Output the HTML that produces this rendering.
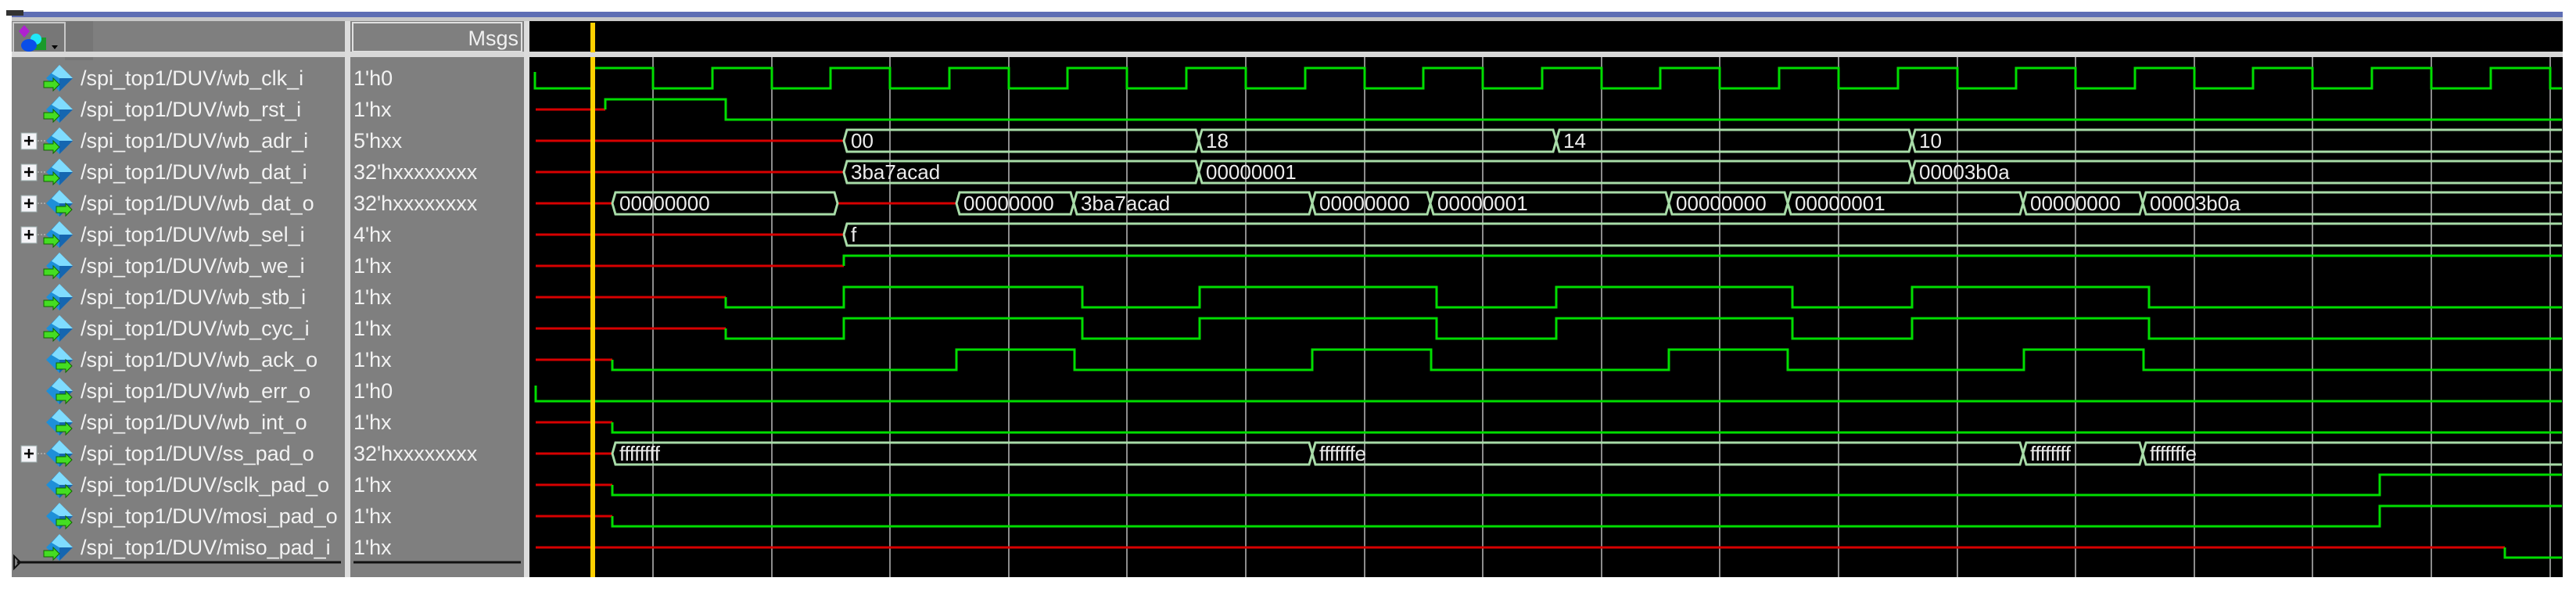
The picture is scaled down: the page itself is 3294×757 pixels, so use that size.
<!DOCTYPE html>
<html><head><meta charset="utf-8"><style>
html,body{margin:0;padding:0;background:#fff;width:3294px;height:757px;overflow:hidden}
svg{display:block}
text{font-family:"Liberation Sans",sans-serif}
</style></head><body>
<svg width="3294" height="757" viewBox="0 0 3294 757" xmlns="http://www.w3.org/2000/svg">
<defs>
<g id="ic">
<polygon points="76,-17 93,0 76,17 59,0" fill="#1e8fd8"/>
<polygon points="76,-17 93,0 76,0 66,-6" fill="#7fdcff"/>
<polygon points="76,0 93,0 76,17" fill="#1566b0"/>
<polygon points="56,4 68,4 68,0 76,8 68,16 68,12 56,12" fill="#44dd22" stroke="#116600" stroke-width="1"/>
</g>
<g id="icr">
<polygon points="76,-17 93,0 76,17 59,0" fill="#1e8fd8"/>
<polygon points="76,-17 93,0 76,0 66,-6" fill="#7fdcff"/>
<polygon points="76,0 93,0 76,17" fill="#1566b0"/>
<polygon points="72,4 84,4 84,0 92,8 84,16 84,12 72,12" fill="#44dd22" stroke="#116600" stroke-width="1"/>
</g>
<g id="pl">
<rect x="27" y="-10" width="20" height="21" fill="#f4f4f8" stroke="#9aa" stroke-width="1"/>
<path d="M31 0H43M37 -6V6" stroke="#000" stroke-width="2.5"/>
<path d="M48 0H58" stroke="#ccc" stroke-width="1" stroke-dasharray="2,2"/>
</g>
</defs>
<!-- top bars -->
<rect x="15" y="15" width="3262" height="8" fill="#5e6eb4"/>
<rect x="8" y="13" width="22" height="7" fill="#333"/>
<rect x="15" y="22" width="3262" height="5" fill="#c8c8c8"/>
<!-- left panels -->
<rect x="15" y="27" width="426" height="711" fill="#7f7f7f"/>
<rect x="441" y="27" width="7" height="711" fill="#dcdcdc"/>
<rect x="448" y="27" width="222" height="711" fill="#7f7f7f"/>
<rect x="670" y="27" width="7" height="711" fill="#dcdcdc"/>
<rect x="677" y="27" width="2600" height="711" fill="#000"/>
<!-- header -->
<rect x="83" y="27" width="36" height="50" fill="#767676"/>
<rect x="17" y="29" width="66" height="39" fill="#777" stroke="#c8c8c8" stroke-width="2"/>
<polygon points="24,20 31,12 38,20 31,28" transform="translate(0,20)" fill="#b020d0"/>
<rect x="44" y="48" width="15" height="16" fill="#1a9a2a"/>
<circle cx="46" cy="50" r="7" fill="#20e8f8"/>
<ellipse cx="37" cy="58" rx="10" ry="8" fill="#0a4ee8"/>
<polygon points="66,58 74,58 70,63" fill="#000"/>
<rect x="451" y="29" width="216" height="37" fill="#7f7f7f" stroke="#e0e0e0" stroke-width="2"/>
<text x="663" y="58" font-size="27" fill="#f0f0f0" text-anchor="end">Msgs</text>
<rect x="15" y="66" width="3262" height="7" fill="#d8d8d8"/>
<rect x="441" y="27" width="7" height="46" fill="#dcdcdc"/>
<rect x="670" y="27" width="7" height="46" fill="#dcdcdc"/>
<!-- names -->
<g font-size="27" fill="#f2f2f2">
<text x="103" y="109">/spi_top1/DUV/wb_clk_i</text>
<text x="103" y="149">/spi_top1/DUV/wb_rst_i</text>
<text x="103" y="189">/spi_top1/DUV/wb_adr_i</text>
<text x="103" y="229">/spi_top1/DUV/wb_dat_i</text>
<text x="103" y="269">/spi_top1/DUV/wb_dat_o</text>
<text x="103" y="309">/spi_top1/DUV/wb_sel_i</text>
<text x="103" y="349">/spi_top1/DUV/wb_we_i</text>
<text x="103" y="389">/spi_top1/DUV/wb_stb_i</text>
<text x="103" y="429">/spi_top1/DUV/wb_cyc_i</text>
<text x="103" y="469">/spi_top1/DUV/wb_ack_o</text>
<text x="103" y="509">/spi_top1/DUV/wb_err_o</text>
<text x="103" y="549">/spi_top1/DUV/wb_int_o</text>
<text x="103" y="589">/spi_top1/DUV/ss_pad_o</text>
<text x="103" y="629">/spi_top1/DUV/sclk_pad_o</text>
<text x="103" y="669">/spi_top1/DUV/mosi_pad_o</text>
<text x="103" y="709">/spi_top1/DUV/miso_pad_i</text>
</g>
<g font-size="27" fill="#f2f2f2">
<text x="452" y="109">1'h0</text>
<text x="452" y="149">1'hx</text>
<text x="452" y="189">5'hxx</text>
<text x="452" y="229">32'hxxxxxxxx</text>
<text x="452" y="269">32'hxxxxxxxx</text>
<text x="452" y="309">4'hx</text>
<text x="452" y="349">1'hx</text>
<text x="452" y="389">1'hx</text>
<text x="452" y="429">1'hx</text>
<text x="452" y="469">1'hx</text>
<text x="452" y="509">1'h0</text>
<text x="452" y="549">1'hx</text>
<text x="452" y="589">32'hxxxxxxxx</text>
<text x="452" y="629">1'hx</text>
<text x="452" y="669">1'hx</text>
<text x="452" y="709">1'hx</text>
</g>
<!-- icons -->
<use href="#ic" transform="translate(0,100)"/>
<use href="#ic" transform="translate(0,140)"/>
<use href="#pl" transform="translate(0,180)"/><use href="#ic" transform="translate(0,180)"/>
<use href="#pl" transform="translate(0,220)"/><use href="#ic" transform="translate(0,220)"/>
<use href="#pl" transform="translate(0,260)"/><use href="#icr" transform="translate(0,260)"/>
<use href="#pl" transform="translate(0,300)"/><use href="#ic" transform="translate(0,300)"/>
<use href="#ic" transform="translate(0,340)"/>
<use href="#ic" transform="translate(0,380)"/>
<use href="#ic" transform="translate(0,420)"/>
<use href="#icr" transform="translate(0,460)"/>
<use href="#icr" transform="translate(0,500)"/>
<use href="#icr" transform="translate(0,540)"/>
<use href="#pl" transform="translate(0,580)"/><use href="#icr" transform="translate(0,580)"/>
<use href="#icr" transform="translate(0,620)"/>
<use href="#icr" transform="translate(0,660)"/>
<use href="#ic" transform="translate(0,700)"/>
<!-- bottom lines -->
<path d="M22 719H436M452 719H666" stroke="#111" stroke-width="3"/>
<polygon points="18,711 26,719 18,727" fill="none" stroke="#111" stroke-width="2"/>
<!-- grid -->
<g stroke="#8c8c8c" stroke-width="2">
<path d="M835 73V738M987 73V738M1138 73V738M1290 73V738M1441 73V738M1593 73V738M1745 73V738M1896 73V738M2048 73V738M2199 73V738M2351 73V738M2503 73V738M2654 73V738M2806 73V738M2957 73V738M3109 73V738M3261 73V738"/>
</g>
<!-- red -->
<g stroke="#d80000" stroke-width="3" fill="none">
<path d="M685 140H774M685 180H1079M685 220H1079M685 260H783M1071 260H1223M685 300H1079M685 340H1079M685 380H928M685 420H928M685 460H783M685 540H783M685 580H783M685 620H783M685 660H783M685 700H3203"/>
</g>
<!-- green -->
<g stroke="#00dd00" stroke-width="3" fill="none">
<path d="M684 92V113H758V87H835V113H911V87H987V113H1062V87H1138V113H1214V87H1290V113H1365V87H1441V113H1517V87H1593V113H1669V87H1745V113H1820V87H1896V113H1972V87H2048V113H2123V87H2199V113H2275V87H2351V113H2427V87H2503V113H2578V87H2654V113H2730V87H2806V113H2881V87H2957V113H3033V87H3109V113H3185V87H3261V113H3276"/>
<path d="M774 140V127H928V153H3276"/>
<path d="M1079 340V327H3276"/>
<path d="M928 380V393H1079V367H1384V393H1534V367H1837V393H1990V367H2292V393H2445V367H2748V393H3276"/>
<path d="M928 420V433H1079V407H1384V433H1534V407H1837V433H1990V407H2292V433H2445V407H2748V433H3276"/>
<path d="M783 460V473H1223V447H1374V473H1678V447H1830V473H2134V447H2286V473H2588V447H2741V473H3276"/>
<path d="M685 493V513H3276"/>
<path d="M783 540V553H3276"/>
<path d="M783 620V633H3043V607H3276"/>
<path d="M783 660V673H3043V647H3276"/>
<path d="M3203 700V713H3276"/>
</g>
<!-- buses -->
<g stroke="#a8dca8" stroke-width="3" fill="none">
<path d="M1079 180L1083 166H1529L1533 180L1529 194H1083Z"/>
<path d="M1533 180L1537 166H1986L1990 180L1986 194H1537Z"/>
<path d="M1990 180L1994 166H2441L2445 180L2441 194H1994Z"/>
<path d="M2445 180L2449 166H3276M2445 180L2449 194H3276"/>
<path d="M1079 220L1083 206H1529L1533 220L1529 234H1083Z"/>
<path d="M1533 220L1537 206H2441L2445 220L2441 234H1537Z"/>
<path d="M2445 220L2449 206H3276M2445 220L2449 234H3276"/>
<path d="M783 260L787 246H1067L1071 260L1067 274H787Z"/>
<path d="M1223 260L1227 246H1369L1373 260L1369 274H1227Z"/>
<path d="M1373 260L1377 246H1674L1678 260L1674 274H1377Z"/>
<path d="M1678 260L1682 246H1825L1829 260L1825 274H1682Z"/>
<path d="M1829 260L1833 246H2130L2134 260L2130 274H1833Z"/>
<path d="M2134 260L2138 246H2282L2286 260L2282 274H2138Z"/>
<path d="M2286 260L2290 246H2583L2587 260L2583 274H2290Z"/>
<path d="M2587 260L2591 246H2736L2740 260L2736 274H2591Z"/>
<path d="M2740 260L2744 246H3276M2740 260L2744 274H3276"/>
<path d="M1079 300L1083 286H3276M1079 300L1083 314H3276"/>
<path d="M783 580L787 566H1674L1678 580L1674 594H787Z"/>
<path d="M1678 580L1682 566H2583L2587 580L2583 594H1682Z"/>
<path d="M2587 580L2591 566H2736L2740 580L2736 594H2591Z"/>
<path d="M2740 580L2744 566H3276M2740 580L2744 594H3276"/>
</g>
<g font-size="26" fill="#ececec">
<text x="1088" y="189">00</text>
<text x="1542" y="189">18</text>
<text x="1999" y="189">14</text>
<text x="2454" y="189">10</text>
<text x="1088" y="229">3ba7acad</text>
<text x="1542" y="229">00000001</text>
<text x="2454" y="229">00003b0a</text>
<text x="792" y="269">00000000</text>
<text x="1232" y="269">00000000</text>
<text x="1382" y="269">3ba7acad</text>
<text x="1687" y="269">00000000</text>
<text x="1838" y="269">00000001</text>
<text x="2143" y="269">00000000</text>
<text x="2295" y="269">00000001</text>
<text x="2596" y="269">00000000</text>
<text x="2749" y="269">00003b0a</text>
<text x="1088" y="309">f</text>
<text x="792" y="589" textLength="52">ffffffff</text>
<text x="1687" y="589" textLength="60">fffffffe</text>
<text x="2596" y="589" textLength="52">ffffffff</text>
<text x="2749" y="589" textLength="60">fffffffe</text>
</g>
<!-- cursor -->
<rect x="755" y="29" width="6" height="38" fill="#ffd000"/>
<rect x="755" y="73" width="6" height="665" fill="#ffd000"/>
</svg>
</body></html>
